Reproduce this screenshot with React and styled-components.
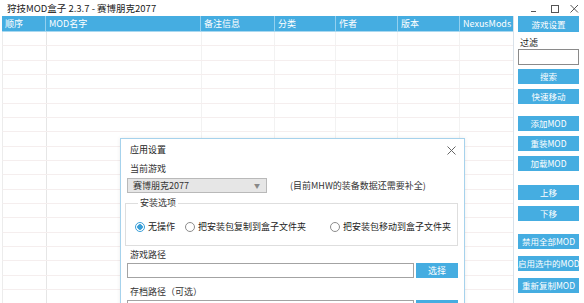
import React from "react";
import styled, { createGlobalStyle } from "styled-components";

const GlobalStyle = createGlobalStyle`
  html, body {
    margin: 0;
    padding: 0;
    background: #fff;
  }
  body {
    font-family: "Noto Sans CJK SC", "Noto Sans", sans-serif;
    color: #333;
  }
`;

const columns = [
  { title: "顺序", width: 44 },
  { title: "MOD名字", width: 155 },
  { title: "备注信息", width: 74 },
  { title: "分类", width: 61 },
  { title: "作者", width: 62 },
  { title: "版本", width: 62 },
  { title: "NexusMods", width: 53 },
];

const sideButtons = [
  { label: "搜索", mt: 4 },
  { label: "快速移动", mt: 5 },
  { label: "添加MOD", mt: 12 },
  { label: "重装MOD", mt: 5 },
  { label: "加载MOD", mt: 5 },
  { label: "上移", mt: 14 },
  { label: "下移", mt: 6 },
  { label: "禁用全部MOD", mt: 13 },
  { label: "启用选中的MOD", mt: 7 },
  { label: "重新复制MOD", mt: 7 },
];

const installOptions = [
  { label: "无操作", ml: 0, checked: true },
  { label: "把安装包复制到盒子文件夹", ml: 10 },
  { label: "把安装包移动到盒子文件夹", ml: 24 },
];

function App() {
  return (
    <Window>
      <GlobalStyle />
      <TitleBar>
        <Title>狩技MOD盒子 2.3.7 - 赛博朋克2077</Title>
        <Controls>
          <svg width="6" height="13" viewBox="0 0 6 13">
            <path d="M0 11.5H5" stroke="#555" strokeWidth="1" />
          </svg>
          <svg width="9" height="13" viewBox="0 0 9 13">
            <rect x="0.5" y="5.5" width="7" height="7" fill="none" stroke="#555" />
          </svg>
          <svg width="9" height="13" viewBox="0 0 9 13">
            <path d="M0.5 5L8 12.5M8 5L0.5 12.5" stroke="#555" strokeWidth="1" />
          </svg>
        </Controls>
      </TitleBar>

      <Main>
        <Table>
          <HeaderRow>
            {columns.map((c) => (
              <HeaderCell key={c.title} $w={c.width}>
                {c.title}
              </HeaderCell>
            ))}
          </HeaderRow>
          {Array.from({ length: 19 }).map((_, i) => (
            <BodyRow key={i}>
              {columns.map((c) => (
                <BodyCell key={c.title} $w={c.width} />
              ))}
            </BodyRow>
          ))}
        </Table>

        <Side>
          <SideButton $h={16}>游戏设置</SideButton>
          <FilterLabel>过滤</FilterLabel>
          <FilterInput />
          {sideButtons.map((b) => (
            <SideButton key={b.label} $mt={b.mt}>
              {b.label}
            </SideButton>
          ))}
        </Side>
      </Main>

      <Dialog>
        <DialogHeader>
          <DialogTitle>应用设置</DialogTitle>
          <svg width="9" height="9" viewBox="0 0 9 9">
            <path d="M0.5 0.5L8.5 8.5M8.5 0.5L0.5 8.5" stroke="#666" strokeWidth="1" />
          </svg>
        </DialogHeader>
        <DialogBody>
          <FieldLabel>当前游戏</FieldLabel>
          <SelectRow>
            <Select>
              <span>赛博朋克2077</span>
              <Arrow>▼</Arrow>
            </Select>
            <Note>(目前MHW的装备数据还需要补全)</Note>
          </SelectRow>

          <GroupBox>
            <legend>安装选项</legend>
            <RadioRow>
              {installOptions.map((o) => (
                <RadioItem key={o.label} $ml={o.ml}>
                  <RadioCircle $checked={o.checked} />
                  {o.label}
                </RadioItem>
              ))}
            </RadioRow>
          </GroupBox>

          <FieldLabel $mt={3}>游戏路径</FieldLabel>
          <PathRow>
            <PathInput />
            <ChooseButton>选择</ChooseButton>
          </PathRow>

          <FieldLabel $mt={8}>存档路径（可选）</FieldLabel>
          <PathRow>
            <PathInput>C:\Users\Admin\Saved Games\CD Projekt Red\Cyberpunk 2077</PathInput>
            <ChooseButton>选择</ChooseButton>
          </PathRow>
        </DialogBody>
      </Dialog>
    </Window>
  );
}

export default App;

// styling for components
const Window = styled.div`
  position: relative;
  width: 584px;
  height: 303px;
  overflow: hidden;
  background: #fff;
`;

const TitleBar = styled.div`
  display: flex;
  align-items: center;
  height: 16px;
  padding-left: 7px;
`;

const Title = styled.span`
  font-size: 9.5px;
  line-height: 16px;
  color: #222;
`;

const Controls = styled.div`
  margin-left: auto;
  display: flex;
  align-self: flex-start;
  gap: 10px;
  padding-right: 5px;
  svg {
    display: block;
  }
  svg:first-child {
    margin-right: 4px;
  }
`;

const Main = styled.div`
  display: flex;
  height: 287px;
`;

const Table = styled.div`
  margin-left: 2px;
  width: 511px;
  border-right: 1px solid #d9e2ea;
  display: flex;
  flex-direction: column;
  overflow: hidden;
`;

const HeaderRow = styled.div`
  display: flex;
  height: 16px;
  flex-shrink: 0;
  background: #45ade1;
  border-bottom: 1px solid #a9d8f0;
  box-sizing: border-box;
`;

const HeaderCell = styled.div`
  width: ${(p) => p.$w}px;
  box-sizing: border-box;
  border-right: 1px solid #93d0ef;
  color: #fff;
  font-size: 9px;
  line-height: 15px;
  padding-left: 3px;
  white-space: nowrap;
  overflow: hidden;
  &:last-child {
    border-right: none;
  }
`;

const BodyRow = styled.div`
  display: flex;
  height: 14.33px;
  flex-shrink: 0;
  box-sizing: border-box;
  border-bottom: 1px solid #f5eeee;
  border-left: 1px solid #ececec;
`;

const BodyCell = styled.div`
  width: ${(p) => p.$w}px;
  box-sizing: border-box;
  border-right: 1px solid #f2f2f2;
  &:first-child {
    border-right-color: #e6e6e6;
  }
  &:last-child {
    border-right: none;
  }
`;

const Side = styled.div`
  flex: 1;
  display: flex;
  flex-direction: column;
  padding-left: 4px;
`;

const SideButton = styled.button`
  width: 61px;
  height: ${(p) => p.$h || 15}px;
  margin-top: ${(p) => p.$mt || 0}px;
  padding: 0;
  border: none;
  background: #45ade1;
  color: #fff;
  font-family: "Noto Sans CJK SC", "Noto Sans", sans-serif;
  font-size: 8.5px;
  line-height: 15px;
  white-space: nowrap;
  overflow: hidden;
`;

const FilterLabel = styled.div`
  margin-top: 5px;
  height: 12px;
  font-size: 9px;
  line-height: 12px;
  padding-left: 2px;
  color: #222;
`;

const FilterInput = styled.div`
  width: 61px;
  height: 16px;
  box-sizing: border-box;
  border: 1px solid #8a8a8a;
  background: #fff;
`;

const Dialog = styled.div`
  position: absolute;
  left: 120px;
  top: 138px;
  width: 345px;
  height: 175px;
  box-sizing: border-box;
  background: #fff;
  border: 1px solid #a6d2ec;
  box-shadow: 0 0 4px rgba(0, 0, 0, 0.08);
`;

const DialogHeader = styled.div`
  display: flex;
  align-items: center;
  justify-content: space-between;
  height: 22px;
  padding: 0 8px 0 9px;
  svg {
    display: block;
  }
`;

const DialogTitle = styled.span`
  font-size: 9px;
  line-height: 12px;
  color: #222;
`;

const DialogBody = styled.div`
  display: flex;
  flex-direction: column;
  padding-left: 6px;
`;

const FieldLabel = styled.div`
  margin-top: ${(p) => p.$mt ?? 2}px;
  padding-left: 3px;
  height: 12px;
  font-size: 9px;
  line-height: 12px;
  color: #333;
`;

const SelectRow = styled.div`
  display: flex;
  align-items: center;
  margin-top: 3px;
`;

const Select = styled.div`
  display: flex;
  align-items: center;
  justify-content: space-between;
  width: 140px;
  height: 15px;
  box-sizing: border-box;
  padding: 0 6px 0 5px;
  background: #e6e6e6;
  border: 1px solid #b9b9b9;
  font-size: 9px;
  line-height: 13px;
  color: #333;
`;

const Arrow = styled.span`
  font-size: 6px;
  color: #888;
`;

const Note = styled.span`
  margin-left: 23px;
  font-size: 9px;
  line-height: 12px;
  color: #333;
`;

const GroupBox = styled.fieldset`
  margin: 4px 0 0 -2px;
  width: 333px;
  box-sizing: border-box;
  padding: 12px 0 12px 9px;
  border: 1px solid #dedede;
  legend {
    margin-left: 3px;
    padding: 0 2px;
    font-size: 9px;
    line-height: 12px;
    color: #333;
  }
`;

const RadioRow = styled.div`
  display: flex;
  align-items: center;
  height: 12px;
`;

const RadioItem = styled.label`
  display: flex;
  align-items: center;
  gap: 3px;
  margin-left: ${(p) => p.$ml}px;
  font-size: 9px;
  line-height: 12px;
  color: #222;
  white-space: nowrap;
`;

const RadioCircle = styled.span`
  width: 10px;
  height: 10px;
  box-sizing: border-box;
  border-radius: 50%;
  border: 1px solid ${(p) => (p.$checked ? "#3a9fd8" : "#8c8c8c")};
  background: ${(p) =>
    p.$checked ? "radial-gradient(circle, #3a9fd8 0 2.5px, #fff 3px)" : "#fff"};
`;

const PathRow = styled.div`
  display: flex;
  gap: 2px;
  margin-top: 2px;
`;

const PathInput = styled.div`
  width: 287px;
  height: 15px;
  box-sizing: border-box;
  border: 1px solid #a3a3a3;
  background: #fff;
  padding-left: 2px;
  font-size: 9px;
  line-height: 13px;
  color: #222;
  white-space: nowrap;
  overflow: hidden;
`;

const ChooseButton = styled.button`
  width: 42px;
  height: 15px;
  padding: 0;
  border: none;
  background: #45ade1;
  color: #fff;
  font-family: "Noto Sans CJK SC", "Noto Sans", sans-serif;
  font-size: 9px;
  line-height: 15px;
`;
